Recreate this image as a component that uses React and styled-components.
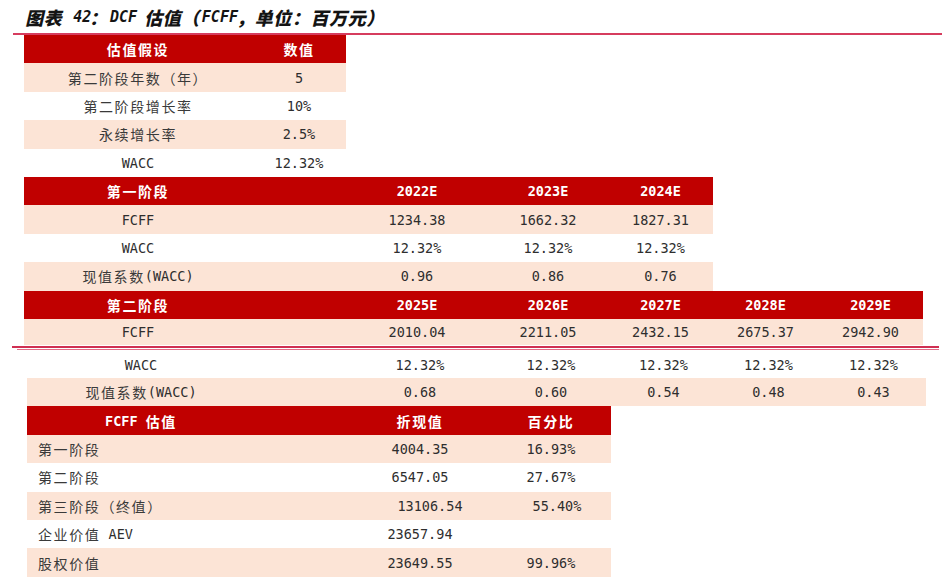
import React from "react";
import styled, { createGlobalStyle, css } from "styled-components";

const Global = createGlobalStyle`
  html, body { margin: 0; padding: 0; background: #ffffff; }
  #root { width: 942px; height: 577px; overflow: hidden; }
`;

const RED = "#c00000";
const PINK = "#fce4d6";

const Page = styled.div`
  display: flex;
  flex-direction: column;
  width: 942px;
`;

const Title = styled.h1`
  margin: 0;
  height: 33px;
  padding-left: 27px;
  display: flex;
  align-items: center;
  font-weight: 700;
  color: #141414;
`;

const Rule = styled.div`
  height: ${(p) => p.$h || 2}px;
  margin-left: ${(p) => p.$left}px;
  margin-right: ${(p) => p.$right || 0}px;
  margin-top: ${(p) => p.$top || 0}px;
  background: ${(p) => p.$color || "#d63c5e"};
`;

const Section = styled.div`
  display: flex;
  flex-direction: column;
  margin-left: ${(p) => p.$left}px;
`;

const PageBreak = styled.div`
  display: flex;
  flex-direction: column;
  height: 6px;
  padding-top: 1px;
  box-sizing: border-box;
`;

const toneBg = { head: RED, pink: PINK, white: "transparent" };

const Row = styled.div`
  display: grid;
  grid-template-columns: ${(p) => p.$cols.map((c) => `${c}px`).join(" ")};
  width: max-content;
  height: ${(p) => p.$h || 28.4}px;
  align-items: center;
  background: ${(p) => toneBg[p.$tone]};
  color: ${(p) => (p.$tone === "head" ? "#ffffff" : "#2e2e2e")};
  font-weight: ${(p) => (p.$tone === "head" ? 700 : 400)};
`;

const Cell = styled.div`
  display: flex;
  align-items: center;
  white-space: nowrap;
  justify-content: ${(p) => (p.$left ? "flex-start" : "center")};
  padding-left: ${(p) => (p.$left ? 11 : p.$shift || 0)}px;
`;

const Han = styled.span`
  font-family: "Noto Sans CJK SC", sans-serif;
  ${(p) =>
    p.$title
      ? css`
          display: inline-block;
          font-size: 18px;
          letter-spacing: 0.6px;
          font-weight: 900;
          transform: skewX(-13deg);
        `
      : css`
          font-size: 14px;
          letter-spacing: 1.6px;
          color: ${(q) => (q.$head ? "#ffffff" : "#3a3a3a")};
        `}
`;

const Lat = styled.span`
  font-family: "DejaVu Sans Mono", monospace;
  white-space: pre;
  ${(p) =>
    p.$title
      ? css`
          display: inline-block;
          font-size: 15px;
          font-weight: 700;
          font-style: italic;
        `
      : css`
          font-size: 13.5px;
        `}
`;

const HAN_RUN = /([\u3000-\u303f\u4e00-\u9fff\uff00-\uffef]+)/;

function Txt({ text, title, head }) {
  return String(text)
    .split(HAN_RUN)
    .map((part, i) =>
      !part ? null : HAN_RUN.test(part) ? (
        <Han key={i} $title={title} $head={head}>
          {part}
        </Han>
      ) : (
        <Lat key={i} $title={title}>
          {part}
        </Lat>
      )
    );
}

const ALL = [228, 94, 142, 120, 105, 105, 105];

function DataRow({ tone, cols, cells, h, leftLabel, shifts = {} }) {
  return (
    <Row $tone={tone} $cols={cols} $h={h}>
      {cells.map((c, i) => (
        <Cell key={i} $left={leftLabel && i === 0} $shift={shifts[i]}>
          <Txt text={c} head={tone === "head"} />
        </Cell>
      ))}
    </Row>
  );
}

export default function App() {
  const t1 = ALL.slice(0, 2);
  const t2 = ALL.slice(0, 5);
  const val = ALL.slice(0, 4);
  return (
    <Page>
      <Global />
      <Title>
        <Txt text="图表 42：DCF 估值（FCFF，单位：百万元）" title />
      </Title>
      <Rule $left={13} />

      <Section $left={24}>
        <DataRow tone="head" cols={t1} cells={["估值假设", "数值"]} />
        <DataRow tone="pink" cols={t1} cells={["第二阶段年数（年）", "5"]} />
        <DataRow tone="white" cols={t1} cells={["第二阶段增长率", "10%"]} />
        <DataRow tone="pink" cols={t1} cells={["永续增长率", "2.5%"]} />
        <DataRow tone="white" cols={t1} cells={["WACC", "12.32%"]} />

        <DataRow tone="head" cols={t2} cells={["第一阶段", "", "2022E", "2023E", "2024E"]} />
        <DataRow tone="pink" cols={t2} cells={["FCFF", "", "1234.38", "1662.32", "1827.31"]} />
        <DataRow tone="white" cols={t2} cells={["WACC", "", "12.32%", "12.32%", "12.32%"]} />
        <DataRow tone="pink" cols={t2} cells={["现值系数(WACC)", "", "0.96", "0.86", "0.76"]} />

        <DataRow
          tone="head"
          cols={ALL}
          h={28}
          cells={["第二阶段", "", "2025E", "2026E", "2027E", "2028E", "2029E"]}
        />
        <DataRow
          tone="pink"
          cols={ALL}
          h={26.5}
          cells={["FCFF", "", "2010.04", "2211.05", "2432.15", "2675.37", "2942.90"]}
        />
      </Section>

      <PageBreak>
        <Rule $left={12} $right={3} $color="#cf2f52" />
        <Rule $left={17} $right={3} $top={1} $h={1} $color="#e36a86" />
      </PageBreak>

      <Section $left={27}>
        <DataRow
          tone="white"
          cols={ALL}
          h={27}
          cells={["WACC", "", "12.32%", "12.32%", "12.32%", "12.32%", "12.32%"]}
        />
        <DataRow
          tone="pink"
          cols={ALL}
          cells={["现值系数(WACC)", "", "0.68", "0.60", "0.54", "0.48", "0.43"]}
        />

        <DataRow tone="head" cols={val} cells={["FCFF 估值", "", "折现值", "百分比"]} />
        <DataRow tone="pink" cols={val} leftLabel cells={["第一阶段", "", "4004.35", "16.93%"]} />
        <DataRow tone="white" cols={val} leftLabel cells={["第二阶段", "", "6547.05", "27.67%"]} />
        <DataRow
          tone="pink"
          cols={val}
          leftLabel
          shifts={{ 2: 20, 3: 12 }}
          cells={["第三阶段（终值）", "", "13106.54", "55.40%"]}
        />
        <DataRow tone="white" cols={val} leftLabel cells={["企业价值 AEV", "", "23657.94", ""]} />
        <DataRow tone="pink" cols={val} leftLabel cells={["股权价值", "", "23649.55", "99.96%"]} />
      </Section>
    </Page>
  );
}
